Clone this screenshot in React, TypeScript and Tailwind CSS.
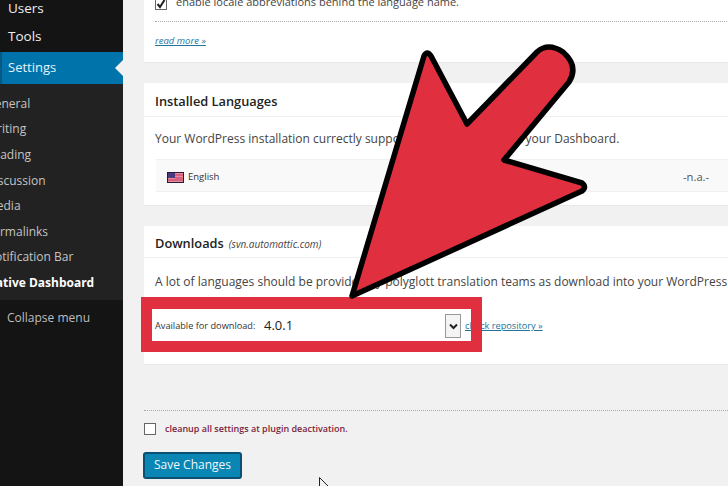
import React from "react";

const sub = [
  { t: "General", cls: "text-[#c4c4c4]" },
  { t: "Writing", cls: "text-[#c4c4c4]" },
  { t: "Reading", cls: "text-[#c4c4c4]" },
  { t: "Discussion", cls: "text-[#c4c4c4]" },
  { t: "Media", cls: "text-[#c4c4c4]" },
  { t: "Permalinks", cls: "text-[#c4c4c4]" },
  { t: "Notification Bar", cls: "text-[#c4c4c4]" },
  { t: "Native Dashboard", cls: "text-white font-bold text-[11.5px]" },
];

function Sidebar() {
  return (
    <aside className="w-[123px] shrink-0 h-full bg-[#141414] flex flex-col overflow-hidden">
      <div className="h-[21px] flex items-end pl-[8px] text-[13.5px] leading-[32px] text-[#eeeeee]">
        <span className="-mb-[3px]">Users</span>
      </div>
      <div className="h-[31px] flex items-center pl-[8px] text-[13.5px] text-[#eeeeee]">Tools</div>
      <div className="h-[32px] bg-[#0073aa] flex items-center relative text-[13px] text-[#e6f4fa]">
        <span className="w-[2px] h-full bg-[#055a85] mr-[6px]" />
        Settings
        <span className="absolute right-0 top-[8px] w-0 h-0 border-y-[8px] border-y-transparent border-r-[8px] border-r-[#f1f1f1]" />
      </div>
      <div className="bg-[#222222] pt-[7px] h-[216px] flex flex-col">
        {sub.map((s) => (
          <div key={s.t} className={`h-[25.6px] flex items-center -ml-[14px] text-[12px] whitespace-nowrap ${s.cls}`}>
            {s.t}
          </div>
        ))}
      </div>
      <div className="pt-[9px] pl-[7px] text-[12px] text-[#bdbdbd]">Collapse menu</div>
    </aside>
  );
}

function Flag() {
  return (
    <svg width="17" height="11" viewBox="0 0 17 11" className="shrink-0">
      <rect width="17" height="11" fill="#2a1a3a" />
      <rect x="1" y="1" width="15" height="9" fill="#e88aa0" />
      <rect x="1" y="1" width="7" height="5" fill="#4a3a80" />
      <path d="M8 3h8M8 6h8M1 8h15" stroke="#c03050" strokeWidth="0.9" />
    </svg>
  );
}

export default function App() {
  return (
    <div
      className="relative w-[728px] h-[486px] overflow-hidden flex bg-[#f1f1f1] text-[#444444]"
      style={{ fontFamily: '"Open Sans", sans-serif' }}
    >
      <Sidebar />
      <main className="flex-1 min-w-0 pl-[21px] flex flex-col overflow-hidden">
        {/* first card */}
        <section className="w-[620px] h-[63px] shrink-0 bg-white border-b border-[#e8e8e8] px-[11px] flex flex-col">
          <div className="h-[26px] -mt-[4px] flex items-center gap-[9px] text-[11px] border-b border-dotted border-[#aaaaaa]">
            <span className="w-[12px] h-[12px] border border-[#666] bg-white flex items-center justify-center -mt-[10px]">
              <svg width="10" height="10" viewBox="0 0 10 10">
                <path d="M1.5 5l2.5 3 4.5-7" fill="none" stroke="#222" strokeWidth="2" />
              </svg>
            </span>
            <span className="-mt-[12px]">enable locale abbreviations behind the language name.</span>
          </div>
          <a className="mt-[12px] text-[9.5px] italic underline text-[#21759b]">read more »</a>
        </section>

        {/* installed languages */}
        <section className="w-[620px] h-[123px] shrink-0 mt-[20px] bg-white border-b border-[#e8e8e8] flex flex-col">
          <h3 className="h-[34px] pt-[4px] px-[11px] flex items-center text-[12.8px] font-semibold text-[#222] border-b border-[#f1f1f1]">
            Installed Languages
          </h3>
          <p className="h-[42px] pt-[2px] px-[11px] flex items-center text-[12px]">
            Your WordPress installation currectly supports these languages at your Dashboard.
          </p>
          <div className="ml-[12px] w-[608px] h-[33px] pt-[3px] bg-[#f9f9f9] border-y border-[#f0f0f0] flex items-center pl-[11px] text-[9.5px] text-[#333]">
            <Flag />
            <span className="ml-[4px]">English</span>
            <span className="absolute left-[683px] text-[11.2px] text-[#555]">-n.a.-</span>
          </div>
        </section>

        {/* downloads */}
        <section className="w-[620px] h-[139px] shrink-0 mt-[20px] bg-white border-b border-[#e8e8e8] flex flex-col">
          <h3 className="h-[32px] pt-[4px] px-[11px] flex items-center gap-[5px] text-[12.8px] font-semibold text-[#222] border-b border-[#f1f1f1]">
            Downloads
            <em className="font-normal text-[10px] text-[#444] mt-[2px]">(svn.automattic.com)</em>
          </h3>
          <p className="h-[41px] pt-[6px] px-[11px] flex items-center text-[12px] whitespace-nowrap">
            A lot of languages should be provided by polyglott translation teams as download into your WordPress installation.
          </p>
          <div className="px-[11px] h-[26px] mt-[14px] flex items-center text-[9.2px] text-[#333] relative">
            <span className="w-[103px] shrink-0">Available for download:</span>
            <span className="w-[203px] h-[26px] shrink-0 bg-white flex items-center justify-between pl-[6px] text-[13px] text-[#222]">
              4.0.1
              <span className="w-[16px] h-[24px] border border-[#999] bg-[#f4f4f4] flex items-center justify-center">
                <svg width="9" height="7" viewBox="0 0 9 7">
                  <path d="M1 1.5l3.5 3.5 3.5-3.5" fill="none" stroke="#222" strokeWidth="2" />
                </svg>
              </span>
            </span>
            <a className="ml-[4px] underline text-[#21759b]">check repository »</a>
          </div>
        </section>

        <div className="w-[620px] shrink-0 mt-[45px] border-t border-dotted border-[#aaaaaa]" />
        <label className="mt-[11px] flex items-center gap-[9px] text-[9px] font-semibold text-[#7a1f3d]">
          <span className="w-[12px] h-[12px] border border-[#666] bg-white" />
          cleanup all settings at plugin deactivation.
        </label>
        <button className="mt-[16px] -ml-[1px] w-[99px] h-[27px] rounded-[3px] bg-[#0a86b4] border-2 border-[#0b4f72] text-[12px] text-[#eef8fc]">
          Save Changes
        </button>
      </main>

      {/* red highlight */}
      <div className="absolute left-[141px] top-[297px] w-[341px] h-[55px] border-x-[11px] border-t-[12px] border-b-[11px] border-[#e03040]" />
      {/* arrow */}
      <svg className="absolute inset-0" width="728" height="486" viewBox="0 0 728 486">
        <path
          d="M352 296 L424 56 Q427 50 431 56 L467 124 L537 52 Q548 42 563 52 Q579 66 569 82 L504 160 L582 183 Q587 187 582 191 Z"
          fill="#e03040"
          stroke="#000"
          strokeWidth="5.5"
          strokeLinejoin="round"
        />
        <path d="M319.5 477.5 L319.5 490 M319.5 477.5 L329 487" stroke="#222" strokeWidth="1" fill="none" />
      </svg>
    </div>
  );
}
